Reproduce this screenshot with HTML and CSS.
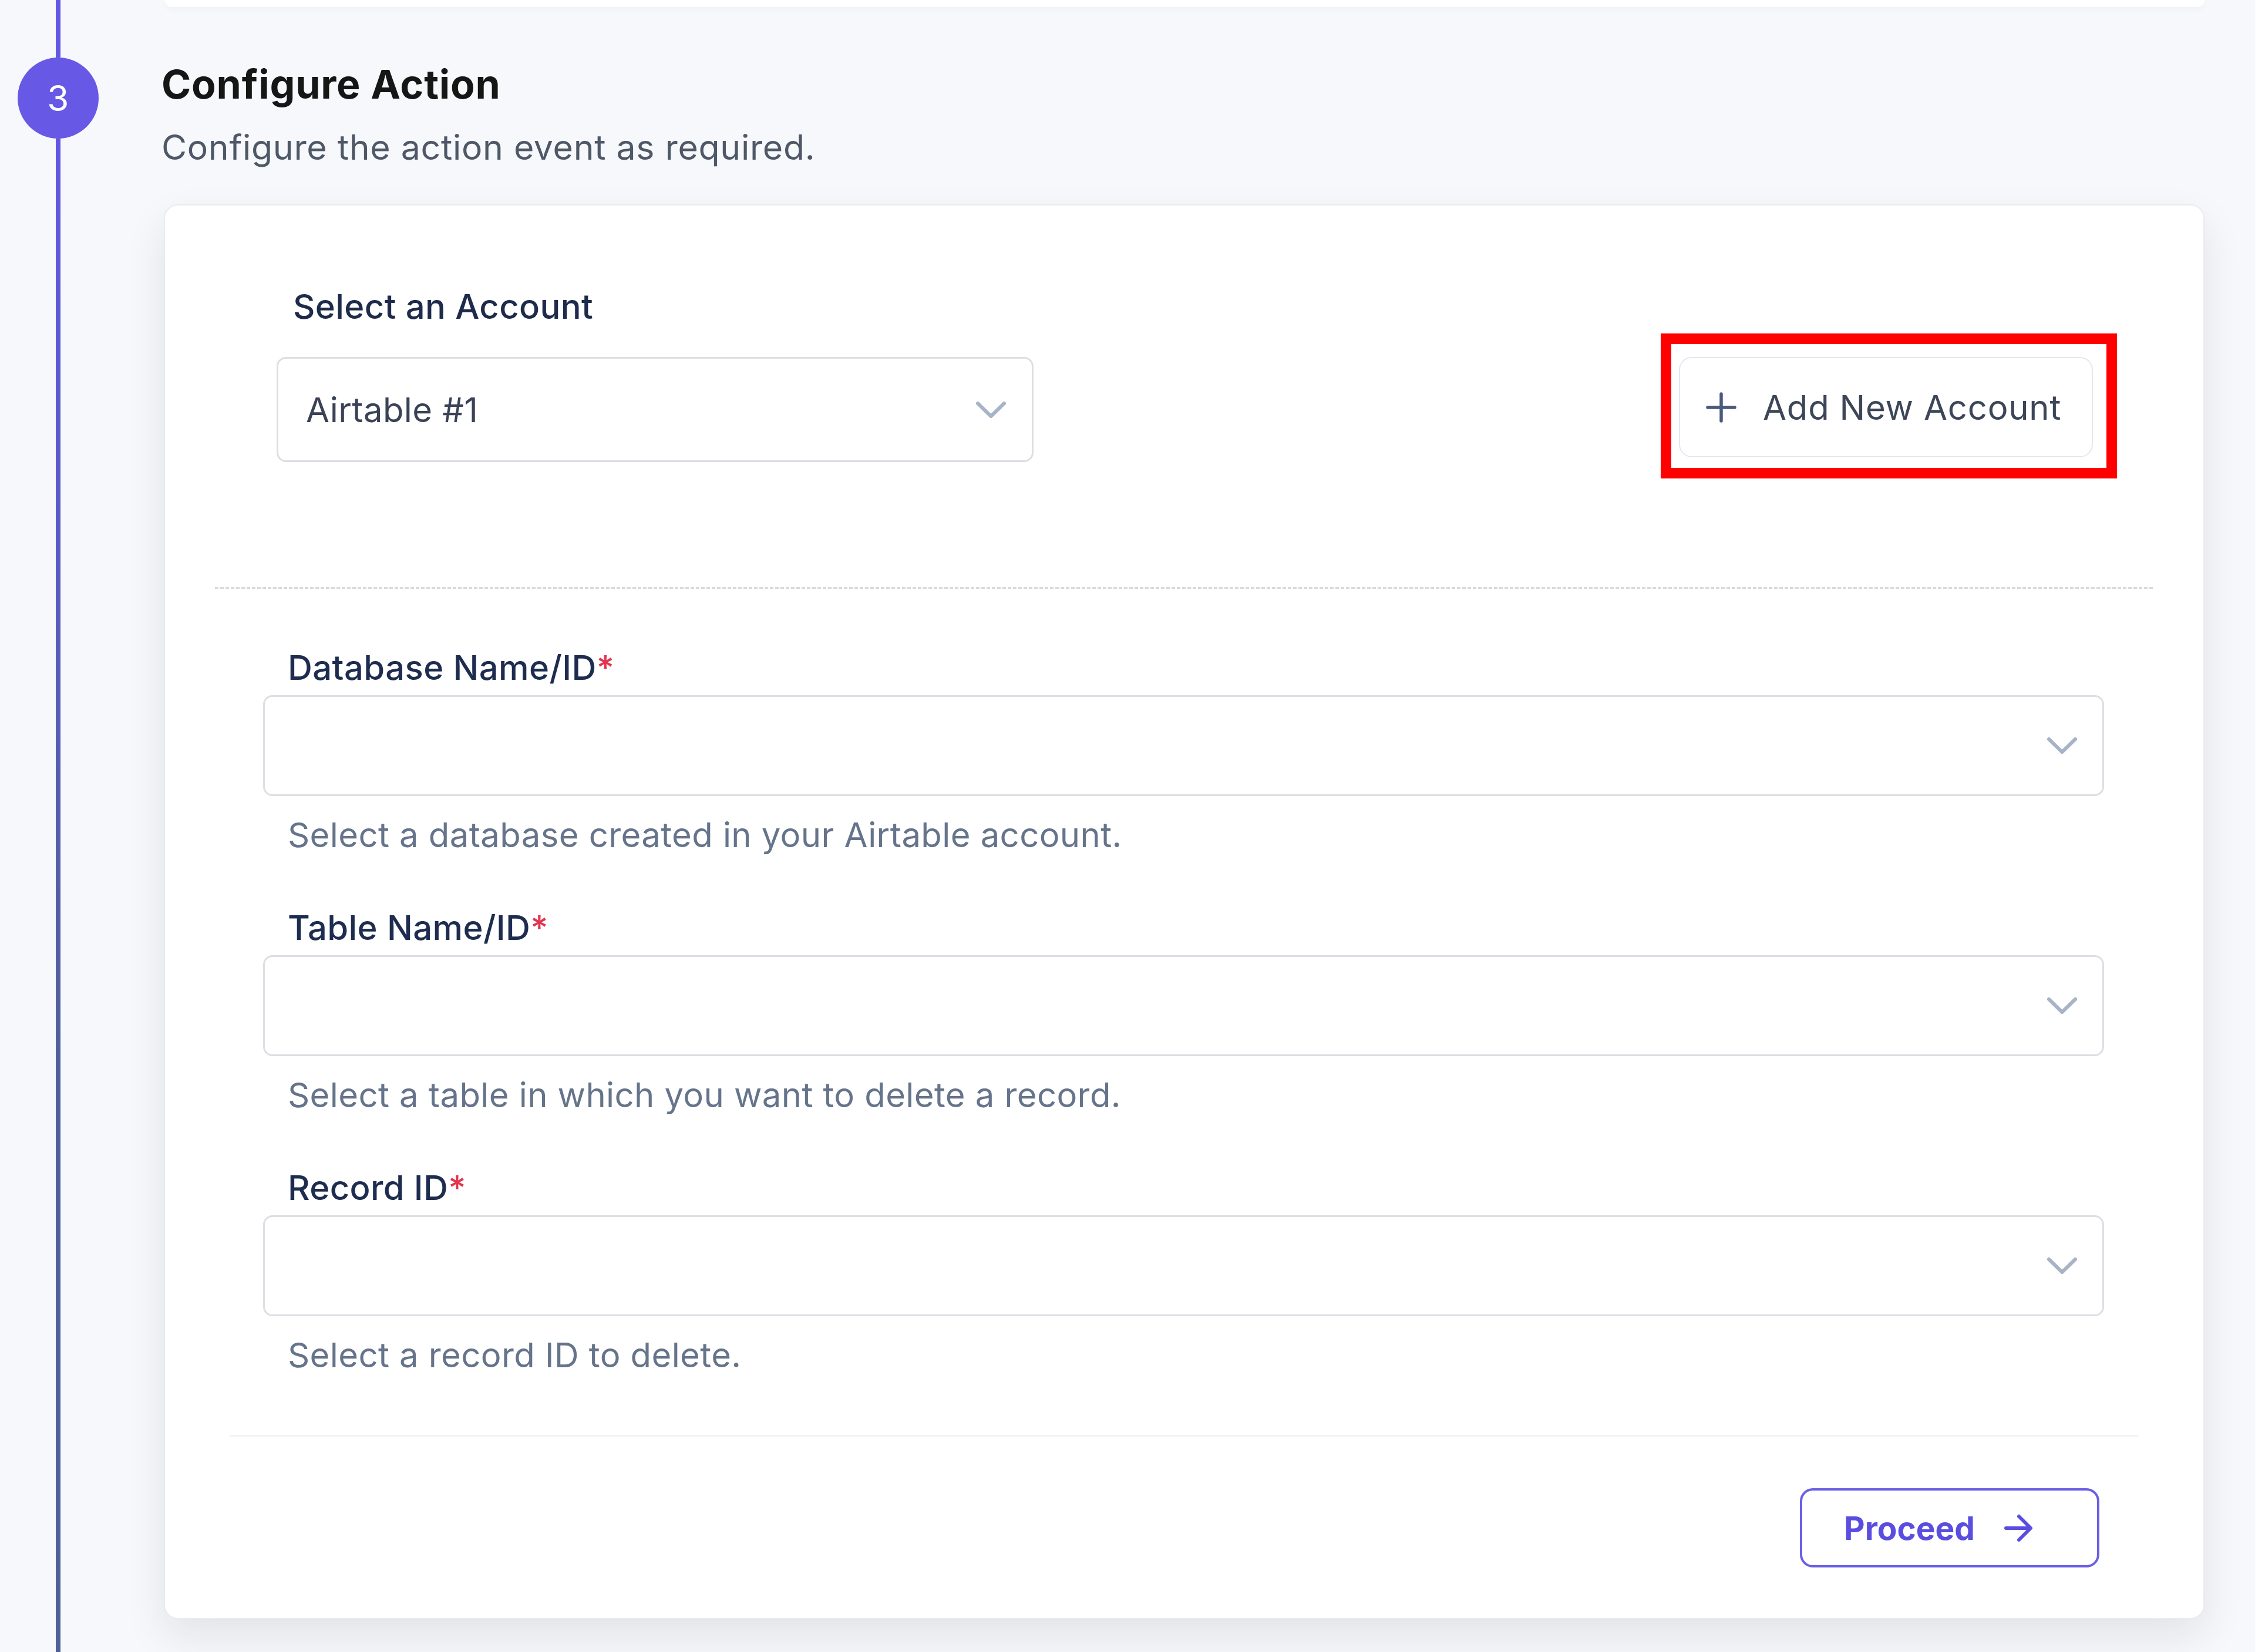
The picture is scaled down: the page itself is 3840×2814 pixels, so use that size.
FILE: index.html
```html
<!DOCTYPE html>
<html lang="en">
<head>
    <meta charset="UTF-8">
    <meta name="viewport" content="width=device-width, initial-scale=1.0">
    <title>Configure Action</title>

    <link rel="stylesheet" href="styles.css">
</head>
<body>

    <div class="page">
        <div class="rail">
            <span class="rail-line rail-top"></span>
            <span class="step-num">3</span>
            <span class="rail-line rail-rest"></span>
        </div>

        <div class="step-body">
            <div class="prev-card"></div>

            <h2 class="step-title">Configure Action</h2>
            <p class="step-sub">Configure the action event as required.</p>

            <div class="card">
                <div class="account-row">
                    <div class="account-pick">
                        <label class="account-label">Select an Account</label>
                        <div class="select-box account-select">
                            <span class="select-value">Airtable #1</span>
                            <svg class="chevron" width="51" height="28" viewBox="0 0 51 28">
                                <polyline points="3,3 25.5,25 48,3" fill="none" stroke="#a7b3c6" stroke-width="6" stroke-linecap="round" stroke-linejoin="round"/>
                            </svg>
                        </div>
                    </div>

                    <div class="highlight">
                        <button type="button" class="add-account">
                            <svg width="52" height="52" viewBox="0 0 52 52">
                                <path d="M26 3 V49 M3 26 H49" stroke="#4b5a7c" stroke-width="5.5" stroke-linecap="round"/>
                            </svg>
                            <span>Add New Account</span>
                        </button>
                    </div>
                </div>

                <div class="dashed-sep"></div>

                <div class="fields">
                    <div class="field">
                        <label class="field-label">Database Name/ID<span class="req">*</span></label>
                        <div class="select-box">
                            <span class="select-value"></span>
                            <svg class="chevron" width="51" height="28" viewBox="0 0 51 28">
                                <polyline points="3,3 25.5,25 48,3" fill="none" stroke="#a7b3c6" stroke-width="6" stroke-linecap="round" stroke-linejoin="round"/>
                            </svg>
                        </div>
                        <p class="field-help">Select a database created in your Airtable account.</p>
                    </div>

                    <div class="field">
                        <label class="field-label">Table Name/ID<span class="req">*</span></label>
                        <div class="select-box">
                            <span class="select-value"></span>
                            <svg class="chevron" width="51" height="28" viewBox="0 0 51 28">
                                <polyline points="3,3 25.5,25 48,3" fill="none" stroke="#a7b3c6" stroke-width="6" stroke-linecap="round" stroke-linejoin="round"/>
                            </svg>
                        </div>
                        <p class="field-help">Select a table in which you want to delete a record.</p>
                    </div>

                    <div class="field">
                        <label class="field-label">Record ID<span class="req">*</span></label>
                        <div class="select-box">
                            <span class="select-value"></span>
                            <svg class="chevron" width="51" height="28" viewBox="0 0 51 28">
                                <polyline points="3,3 25.5,25 48,3" fill="none" stroke="#a7b3c6" stroke-width="6" stroke-linecap="round" stroke-linejoin="round"/>
                            </svg>
                        </div>
                        <p class="field-help">Select a record ID to delete.</p>
                    </div>
                </div>

                <div class="solid-sep"></div>

                <div class="card-footer">
                    <button type="button" class="proceed">
                        <span>Proceed</span>
                        <svg width="51" height="50" viewBox="0 0 51 50">
                            <path d="M4 25 H45 M26 5 L46 25 L26 45" fill="none" stroke="#5a4de0" stroke-width="6" stroke-linecap="round" stroke-linejoin="round"/>
                        </svg>
                    </button>
                </div>
            </div>
        </div>
    </div>

</body>
</html>
```

FILE: styles.css
```css
*, *::before, *::after {
    box-sizing: border-box;
}

body {
    margin: 0;
    padding: 0;
    background-color: #f7f8fb;
    font-family: Inter, 'Liberation Sans', sans-serif;
    letter-spacing: 0.4px;
}

.page {
    display: grid;
    grid-template-columns: 279px 1fr;
    padding-right: 86px;
    min-height: 2814px;
}

.rail {
    width: 198px;
    display: flex;
    flex-direction: column;
    align-items: center;
}

.rail-line {
    width: 8px;
}

.rail-top {
    height: 98px;
    background-color: #6157e2;
}

.rail-rest {
    flex: 1;
    background: linear-gradient(#6157e2, #515f9c 60%, #4f5f97);
}

.step-num {
    width: 138px;
    height: 138px;
    border-radius: 50%;
    background-color: #6758e6;
    color: white;
    font-size: 60px;
    display: flex;
    align-items: center;
    justify-content: center;
}

.step-body {
    padding-bottom: 56px;
}

.prev-card {
    height: 12px;
    margin-left: 2px;
    background-color: white;
    border-radius: 0 0 24px 24px;
    box-shadow: 0 4px 12px rgba(15, 23, 42, 0.03);
}

.step-title {
    margin: 91px 0 0 -4px;
    font-size: 68px;
    line-height: 80px;
    font-weight: 700;
    letter-spacing: 0.8px;
    color: #161616;
}

.step-sub {
    margin: 28px 0 0 -4px;
    font-size: 59px;
    line-height: 80px;
    letter-spacing: 0.7px;
    color: #4f5867;
}

.card {
    margin-top: 57px;
    background-color: white;
    border: 2px solid #e9ebef;
    border-radius: 24px;
    box-shadow: 0 30px 70px rgba(15, 23, 42, 0.09);
}

.account-row {
    display: flex;
    justify-content: space-between;
    align-items: flex-end;
    padding: 132px 188px 0 190px;
}

.account-pick {
    width: 1289px;
}

.account-label {
    display: block;
    padding-left: 28px;
    margin-bottom: 46px;
    font-size: 58px;
    line-height: 80px;
    font-weight: 500;
    color: #1e2b4a;
}

.select-box {
    display: flex;
    align-items: center;
    justify-content: space-between;
    height: 172px;
    padding: 0 43px 0 47px;
    border: 3px solid #dcdee3;
    border-radius: 16px;
    background-color: white;
}

.account-select {
    height: 179px;
    padding-right: 44px;
}

.select-value {
    font-size: 58px;
    line-height: 80px;
    color: #3a4355;
}

.highlight {
    position: relative;
    margin-bottom: 8px;
}

/* red annotation frame drawn over the screenshot */
.highlight::after {
    content: "";
    position: absolute;
    top: -40px;
    left: -31px;
    right: -41px;
    bottom: -36px;
    border: 18px solid #ff0000;
    pointer-events: none;
}

.add-account {
    display: flex;
    align-items: center;
    gap: 45px;
    width: 705px;
    height: 171px;
    padding: 0 44px 0 44px;
    background-color: white;
    border: 2px solid #e3e8ef;
    border-radius: 22px;
    font-family: inherit;
    font-size: 58px;
    line-height: 80px;
    letter-spacing: 0.8px;
    color: #3c4657;
    cursor: pointer;
}

.dashed-sep {
    margin: 213px 86px 0 85px;
    border-top: 3px dashed #d7dae0;
}

.fields {
    padding: 94px 169px 0 167px;
}

.field + .field {
    margin-top: 78px;
}

.field-label {
    display: block;
    padding-left: 42px;
    margin-bottom: 7px;
    font-size: 58px;
    line-height: 80px;
    font-weight: 500;
    color: #1e2d4f;
}

.req {
    color: #e3344f;
}

.field-help {
    margin: 26px 0 0 0;
    padding-left: 42px;
    font-size: 58px;
    line-height: 80px;
    color: #66748b;
}

.solid-sep {
    margin: 96px 110px 0 111px;
    border-top: 3px solid #eef1f6;
}

.card-footer {
    display: flex;
    justify-content: flex-end;
    padding: 88px 177px 86px 0;
}

.proceed {
    display: flex;
    align-items: center;
    gap: 49px;
    width: 510px;
    height: 135px;
    padding: 0 0 0 71px;
    background-color: white;
    border: 4px solid #6a5fe6;
    border-radius: 22px;
    font-family: inherit;
    font-size: 55px;
    font-weight: 700;
    letter-spacing: 0;
    color: #5a4de0;
    cursor: pointer;
}
```
